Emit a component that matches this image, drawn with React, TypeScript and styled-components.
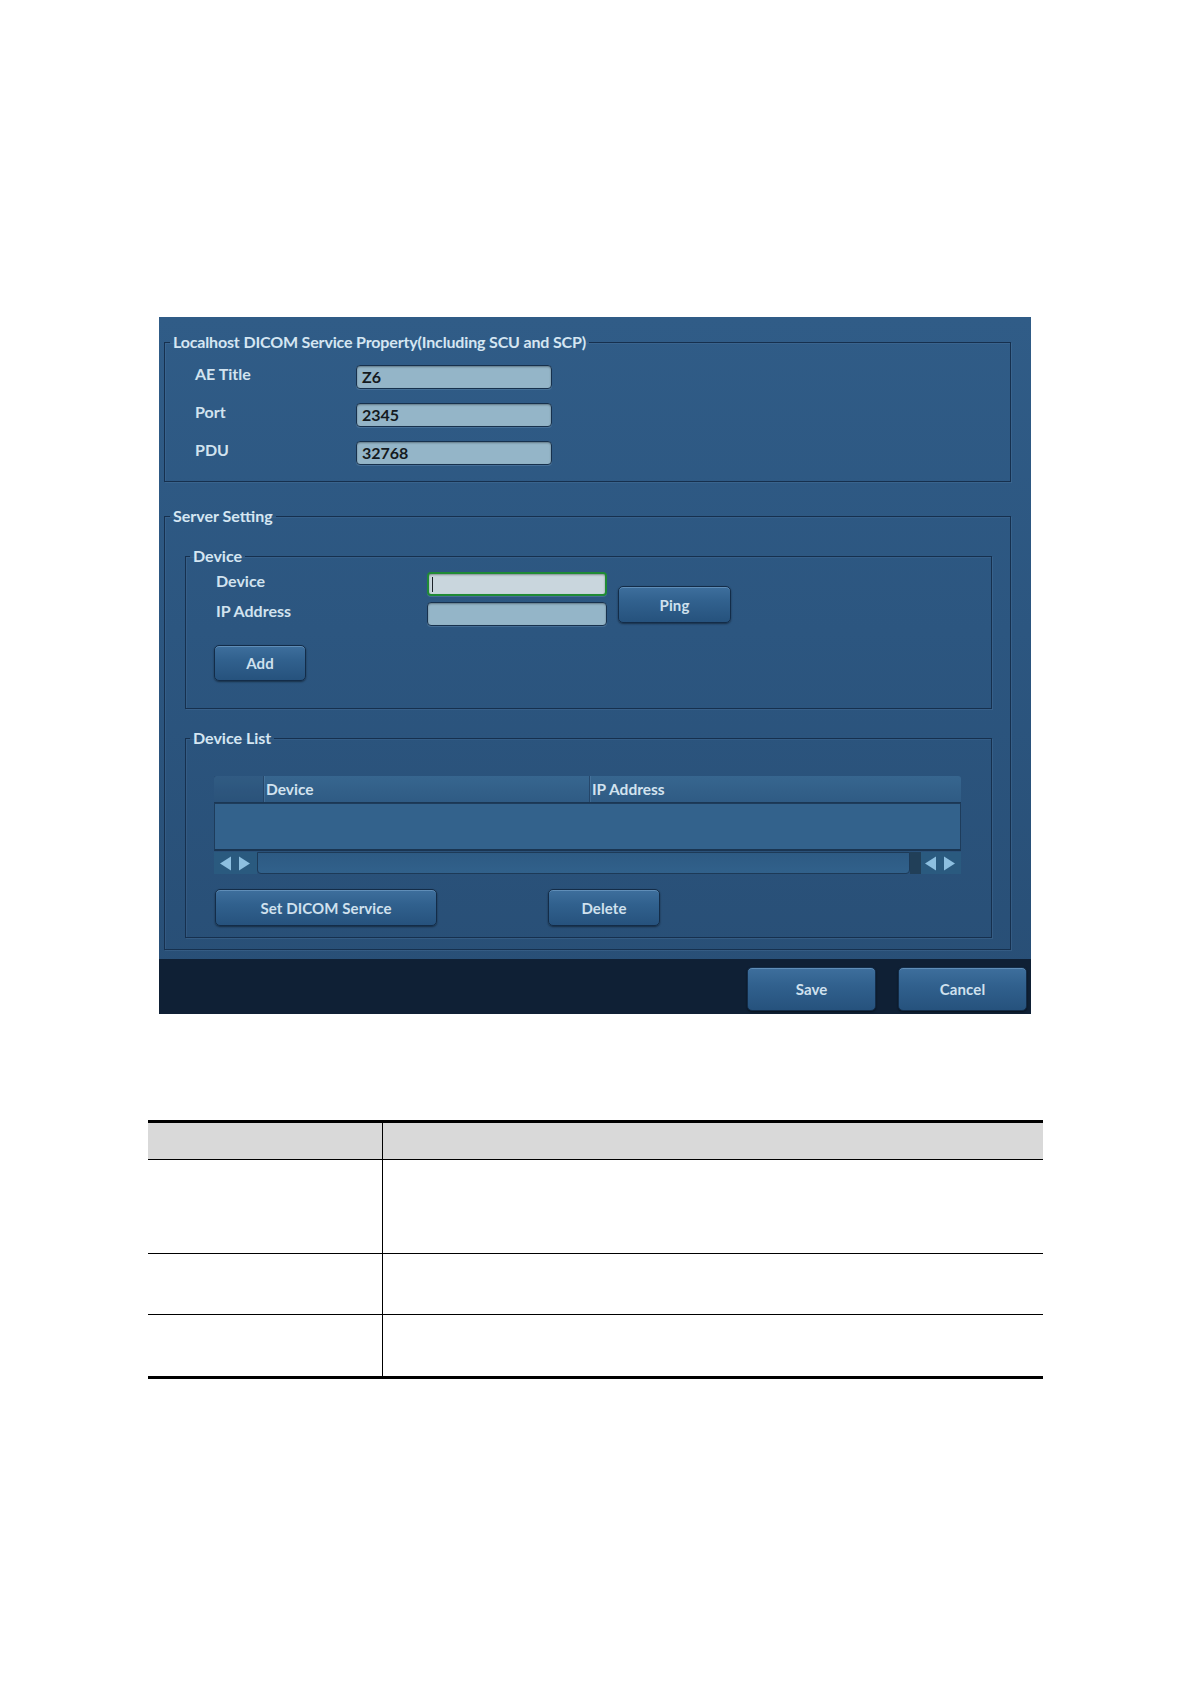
import React from "react";
import styled, { createGlobalStyle } from "styled-components";

const Global = createGlobalStyle`
  html, body { margin: 0; padding: 0; background: #ffffff; }
  body { font-family: Lato, "Open Sans", "Liberation Sans", sans-serif; }
  * { box-sizing: border-box; }
`;

const Page = styled.div`
  padding-top: 317px;
  padding-bottom: 200px;
`;

const Dialog = styled.div`
  margin-left: 159px;
  width: 872px;
  height: 697px;
  display: flex;
  flex-direction: column;
  background: linear-gradient(180deg, #305c87 0%, #2c5680 45%, #284e75 100%);
`;

const DialogBody = styled.div`
  flex: 1;
  padding: 16px 20px 0 5px;
`;

const GroupBox = styled.fieldset<{ $mt?: number }>`
  margin: ${(p) => p.$mt ?? 0}px 0 0 0;
  padding: 0;
  min-width: 0;
  border: 1px solid #16304e;
  box-shadow: 1px 1px 0 rgba(110, 150, 190, 0.18), inset 1px 1px 0 rgba(110, 150, 190, 0.14);
`;

const Legend = styled.legend<{ $ml: number; $tight?: boolean }>`
  margin-left: ${(p) => p.$ml}px;
  padding: 0 3px;
  font-weight: 700;
  font-size: 16px;
  line-height: 18px;
  letter-spacing: ${(p) => (p.$tight ? "-0.16px" : "0")};
  color: #d5e6f2;
`;

const LocalForm = styled.div`
  display: flex;
  flex-direction: column;
  gap: 14px;
  padding: 14px 0 16px 30px;
`;

const Row = styled.div`
  display: flex;
  align-items: flex-start;
`;

const Label = styled.div<{ $w?: number }>`
  width: ${(p) => (p.$w ? `${p.$w}px` : "auto")};
  height: 24px;
  font-weight: 700;
  font-size: 16px;
  line-height: 18px;
  color: #d2e3ef;
`;

const TextField = styled.div<{ $w: number; $focus?: boolean }>`
  width: ${(p) => p.$w}px;
  height: 24px;
  border-radius: 4px;
  border: ${(p) => (p.$focus ? "2px solid #1f8a35" : "1px solid #17314d")};
  background: ${(p) => (p.$focus ? "#c9d6dd" : "#94b5c8")};
  box-shadow: inset 0 1px 2px rgba(0, 0, 0, 0.35), 0 1px 0 rgba(140, 180, 210, 0.25);
  padding-left: ${(p) => (p.$focus ? 3 : 5)}px;
  font-weight: 700;
  font-size: 16px;
  line-height: 22px;
  color: #141a20;
  display: flex;
  align-items: center;
`;

const Caret = styled.span`
  display: block;
  width: 1px;
  height: 15px;
  background: #1b2228;
`;

const ServerBody = styled.div`
  padding: 22px 18px 11px 20px;
`;

const DeviceBody = styled.div`
  padding: 7px 0 27px 30px;
`;

const Column = styled.div`
  display: flex;
  flex-direction: column;
  gap: 6px;
`;

const Button = styled.button<{ $w: number; $h: number; $ml?: number; $mt?: number }>`
  width: ${(p) => p.$w}px;
  height: ${(p) => p.$h}px;
  margin-left: ${(p) => p.$ml ?? 0}px;
  margin-top: ${(p) => p.$mt ?? 0}px;
  padding: 0;
  border: 1px solid #132c48;
  border-radius: 5px;
  background: linear-gradient(180deg, #3e6f9d 0%, #31618e 40%, #26527d 100%);
  box-shadow: inset 0 1px 0 rgba(160, 200, 235, 0.35), 0 1px 2px rgba(0, 0, 0, 0.45);
  color: #d0e1ee;
  font-family: Lato, "Open Sans", "Liberation Sans", sans-serif;
  font-weight: 700;
  font-size: 15px;
  letter-spacing: 0.1px;
  cursor: pointer;
  flex-shrink: 0;
`;

const ListBody = styled.div`
  padding: 29px 0 11px 28px;
`;

const ListGrid = styled.div`
  width: 747px;
  display: flex;
  flex-direction: column;
`;

const ListHeader = styled.div`
  display: flex;
  height: 27px;
  border-radius: 3px 3px 0 0;
  background: linear-gradient(180deg, #37668f 0%, #2f5b84 100%);
  border-bottom: 1px solid #1b3754;
`;

const HeaderCell = styled.div<{ $w?: number; $first?: boolean }>`
  ${(p) => (p.$w ? `width: ${p.$w}px;` : "flex: 1;")}
  padding-left: 2px;
  font-weight: 700;
  font-size: 15.5px;
  line-height: 26px;
  color: #d2e3ef;
  ${(p) =>
    p.$first
      ? "background: rgba(20, 45, 75, 0.18);"
      : "border-left: 1px solid rgba(25, 50, 80, 0.55); box-shadow: inset 1px 0 0 rgba(120, 160, 200, 0.22);"}
`;

const ListArea = styled.div`
  height: 48px;
  background: #33628c;
  border: 1px solid #1e3c5b;
  border-bottom: 2px solid #1a3552;
`;

const ScrollBar = styled.div`
  display: flex;
  height: 22px;
  margin-top: 1px;
`;

const ArrowCell = styled.div<{ $w: number }>`
  width: ${(p) => p.$w}px;
  background: #2a5a7f;
  display: flex;
  align-items: center;
  justify-content: center;
`;

const Track = styled.div`
  flex: 1;
  background: linear-gradient(180deg, #2d5a83 0%, #31618b 100%);
  border: 1px solid #1d3a57;
  border-radius: 0 0 4px 4px;
`;

const TrackEnd = styled.div`
  width: 11px;
  background: #213f58;
`;

const ListButtons = styled.div`
  display: flex;
  align-items: flex-start;
  margin-top: 15px;
  padding-left: 1px;
`;

const Footer = styled.div`
  height: 55px;
  background: #0f2035;
  display: flex;
  justify-content: flex-end;
  align-items: flex-start;
  gap: 22px;
  padding: 8px 4px 0 0;
`;

const DocTable = styled.div`
  margin: 106px 0 0 148px;
  width: 895px;
  border-top: 3px solid #000;
  border-bottom: 3px solid #000;
`;

const DocRow = styled.div<{ $h: number; $head?: boolean; $last?: boolean }>`
  display: grid;
  grid-template-columns: 234px 1fr;
  height: ${(p) => p.$h}px;
  background: ${(p) => (p.$head ? "#d9d9d9" : "#ffffff")};
  border-bottom: ${(p) => (p.$last ? "none" : "1px solid #000")};
`;

const DocCell = styled.div<{ $divider?: boolean }>`
  border-left: ${(p) => (p.$divider ? "1px solid #000" : "none")};
`;

const Arrows = () => (
  <svg width="32" height="15" viewBox="0 0 32 15">
    <polygon points="0,7.5 11,0.5 11,14.5" fill="#8dbfe0" />
    <polygon points="19,0.5 30,7.5 19,14.5" fill="#8dbfe0" />
  </svg>
);

export default function App() {
  return (
    <>
      <Global />
      <Page>
        <Dialog>
          <DialogBody>
            <GroupBox>
              <Legend $ml={5} $tight>
                Localhost DICOM Service Property(Including SCU and SCP)
              </Legend>
              <LocalForm>
                <Row>
                  <Label $w={161}>AE Title</Label>
                  <TextField $w={196}>Z6</TextField>
                </Row>
                <Row>
                  <Label $w={161}>Port</Label>
                  <TextField $w={196}>2345</TextField>
                </Row>
                <Row>
                  <Label $w={161}>PDU</Label>
                  <TextField $w={196}>32768</TextField>
                </Row>
              </LocalForm>
            </GroupBox>

            <GroupBox $mt={25}>
              <Legend $ml={5}>Server Setting</Legend>
              <ServerBody>
                <GroupBox>
                  <Legend $ml={4}>Device</Legend>
                  <DeviceBody>
                    <Row>
                      <Column>
                        <Label $w={211}>Device</Label>
                        <Label $w={211}>IP Address</Label>
                      </Column>
                      <Column>
                        <TextField $w={180} $focus>
                          <Caret />
                        </TextField>
                        <TextField $w={180} />
                      </Column>
                      <Button $w={113} $h={37} $ml={11} $mt={14}>
                        Ping
                      </Button>
                    </Row>
                    <Button $w={92} $h={36} $ml={-2} $mt={19}>
                      Add
                    </Button>
                  </DeviceBody>
                </GroupBox>

                <GroupBox $mt={20}>
                  <Legend $ml={4}>Device List</Legend>
                  <ListBody>
                    <ListGrid>
                      <ListHeader>
                        <HeaderCell $w={49} $first />
                        <HeaderCell $w={326}>Device</HeaderCell>
                        <HeaderCell>IP Address</HeaderCell>
                      </ListHeader>
                      <ListArea />
                      <ScrollBar>
                        <ArrowCell $w={43}>
                          <Arrows />
                        </ArrowCell>
                        <Track />
                        <TrackEnd />
                        <ArrowCell $w={40}>
                          <Arrows />
                        </ArrowCell>
                      </ScrollBar>
                    </ListGrid>
                    <ListButtons>
                      <Button $w={222} $h={37}>
                        Set DICOM Service
                      </Button>
                      <Button $w={112} $h={37} $ml={111}>
                        Delete
                      </Button>
                    </ListButtons>
                  </ListBody>
                </GroupBox>
              </ServerBody>
            </GroupBox>
          </DialogBody>
          <Footer>
            <Button $w={129} $h={44}>
              Save
            </Button>
            <Button $w={129} $h={44}>
              Cancel
            </Button>
          </Footer>
        </Dialog>

        <DocTable>
          <DocRow $h={37} $head>
            <DocCell />
            <DocCell $divider />
          </DocRow>
          <DocRow $h={94}>
            <DocCell />
            <DocCell $divider />
          </DocRow>
          <DocRow $h={61}>
            <DocCell />
            <DocCell $divider />
          </DocRow>
          <DocRow $h={61} $last>
            <DocCell />
            <DocCell $divider />
          </DocRow>
        </DocTable>
      </Page>
    </>
  );
}
